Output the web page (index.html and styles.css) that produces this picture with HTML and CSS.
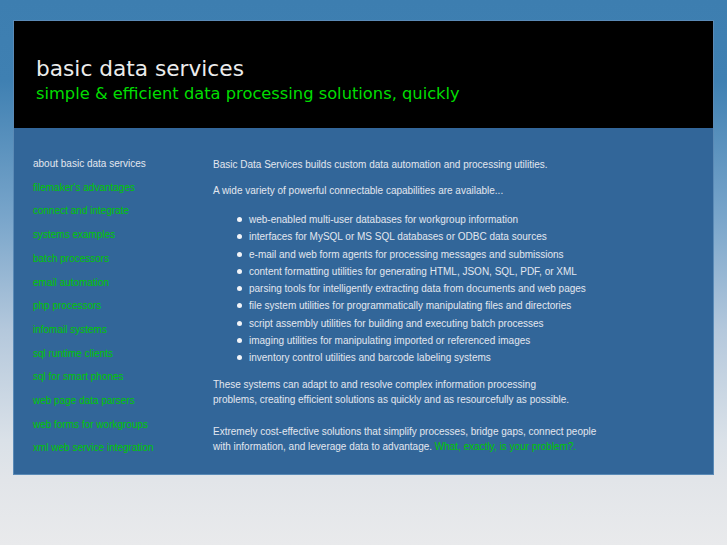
FILE: index.html
```html
<!DOCTYPE html>
<html>
<head>
<meta charset="utf-8">
<link rel="stylesheet" href="styles.css">
</head>
<body>
<div class="page">
  <header class="masthead">
    <h1 class="title">basic data services</h1>
    <p class="tagline">simple &amp; efficient data processing solutions, quickly</p>
  </header>
  <div class="body">
    <nav class="nav">
      <a class="nav-item current">about basic data services</a>
      <a class="nav-item">filemaker's advantages</a>
      <a class="nav-item">connect and integrate</a>
      <a class="nav-item">systems examples</a>
      <a class="nav-item">batch processors</a>
      <a class="nav-item">email automation</a>
      <a class="nav-item">php processors</a>
      <a class="nav-item">infomail systems</a>
      <a class="nav-item">sql runtime clients</a>
      <a class="nav-item">sql for smart phones</a>
      <a class="nav-item">web page data parsers</a>
      <a class="nav-item">web forms for workgroups</a>
      <a class="nav-item">xml web service integration</a>
    </nav>
    <main class="content">
      <p class="intro">Basic Data Services builds custom data automation and processing utilities.</p>
      <p class="intro">A wide variety of powerful connectable capabilities are available...</p>
      <ul class="caps">
        <li>web-enabled multi-user databases for workgroup information</li>
        <li>interfaces for MySQL or MS SQL databases or ODBC data sources</li>
        <li>e-mail and web form agents for processing messages and submissions</li>
        <li>content formatting utilities for generating HTML, JSON, SQL, PDF, or XML</li>
        <li>parsing tools for intelligently extracting data from documents and web pages</li>
        <li>file system utilities for programmatically manipulating files and directories</li>
        <li>script assembly utilities for building and executing batch processes</li>
        <li>imaging utilities for manipulating imported or referenced images</li>
        <li>inventory control utilities and barcode labeling systems</li>
      </ul>
      <p class="para">These systems can adapt to and resolve complex information processing<br>problems, creating efficient solutions as quickly and as resourcefully as possible.</p>
      <p class="para">Extremely cost-effective solutions that simplify processes, bridge gaps, connect people<br>with information, and leverage data to advantage. <span class="hl">What, exactly, is your problem?.</span></p>
    </main>
  </div>
</div>
</body>
</html>
```

FILE: styles.css
```css
html, body {
  margin: 0;
  padding: 0;
}
body {
  height: 545px;
  background: linear-gradient(to bottom, #3d7eb0 0px, #3f80b2 80px, #7aa6cb 220px, #b4c8dc 330px, #dae1e8 440px, #e2e5e9 480px, #e9eaec 545px);
  font-family: "Liberation Sans", Arial, sans-serif;
  overflow: hidden;
}
.page {
  margin: 20px 0 0 13px;
  width: 699px;
  border: 1px solid #5a8ab6;
}
.masthead {
  background: #000;
  height: 107px;
  padding: 0 0 0 22px;
  box-sizing: border-box;
  display: flex;
  flex-direction: column;
  justify-content: flex-start;
}
.title {
  margin: 34px 0 0 0;
  font-family: "DejaVu Sans", Verdana, sans-serif;
  font-weight: normal;
  font-size: 21.7px;
  line-height: 28px;
  color: #ececec;
}
.tagline {
  margin: 0 0 0 0;
  font-family: "DejaVu Sans", Verdana, sans-serif;
  font-size: 16.3px;
  line-height: 22px;
  color: #00dd00;
}
.body {
  background: #326699;
  height: 346px;
  display: flex;
  font-size: 10px;
  color: #e3e7ef;
}
.nav {
  width: 180px;
  padding: 30px 0 0 19px;
  display: flex;
  flex-direction: column;
  gap: 11.5px;
}
.nav-item {
  color: #00c800;
  line-height: 12.2px;
  display: block;
}
.nav-item.current {
  color: #e3e7ef;
}
.content {
  padding: 30px 0 0 0;
  width: 400px;
}
.intro {
  margin: 0 0 13px 0;
  line-height: 13px;
}
.caps {
  margin: 14px 0 11px 0;
  padding: 0 0 0 36px;
  list-style: none;
}
.caps li {
  line-height: 17.25px;
  position: relative;
}
.caps li::before {
  content: "";
  position: absolute;
  left: -12px;
  top: 6px;
  width: 5px;
  height: 5px;
  border-radius: 50%;
  background: #f2f4f8;
}
.para {
  margin: 0 0 17px 0;
  line-height: 15px;
}
.hl {
  color: #00c800;
}
```
